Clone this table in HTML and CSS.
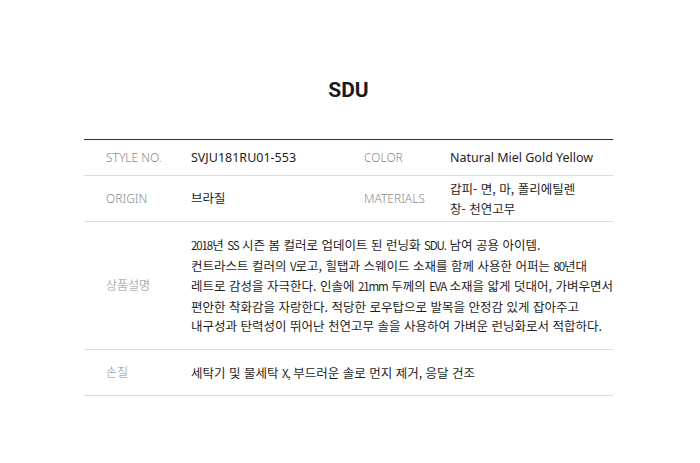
FILE: index.html
```html
<!DOCTYPE html>
<html lang="ko">
<head>
<meta charset="utf-8">
<title>SDU</title>
<link rel="stylesheet" href="styles.css">
</head>
<body>
<div class="wrap">
  <h1 class="title">SDU</h1>
  <div class="spec">
    <div class="row row-1">
      <div class="label">STYLE NO.</div>
      <div class="value">SVJU181RU01-553</div>
      <div class="label">COLOR</div>
      <div class="value">Natural Miel Gold Yellow</div>
    </div>
    <div class="row row-2">
      <div class="label">ORIGIN</div>
      <div class="value">브라질</div>
      <div class="label">MATERIALS</div>
      <div class="value multi">갑피- 면, 마, 폴리에틸렌<br>창- 천연고무</div>
    </div>
    <div class="row row-3">
      <div class="label">상품설명</div>
      <div class="value wide desc"><span class="en">2018</span>년 <span class="en">SS</span> 시즌 봄 컬러로 업데이트 된 런닝화 <span class="en">SDU.</span> 남여 공용 아이템.<br>컨트라스트 컬러의 <span class="en">V</span>로고, 힐탭과 스웨이드 소재를 함께 사용한 어퍼는 <span class="en">80</span>년대<br>레트로 감성을 자극한다. 인솔에 <span class="en">21mm</span> 두께의 <span class="en">EVA</span> 소재을 얇게 덧대어, 가벼우면서<br>편안한 착화감을 자랑한다. 적당한 로우탑으로 발목을 안정감 있게 잡아주고<br>내구성과 탄력성이 뛰어난 천연고무 솔을 사용하여 가벼운 런닝화로서 적합하다.</div>
    </div>
    <div class="row row-4">
      <div class="label">손질</div>
      <div class="value wide">세탁기 및 물세탁 <span class="en">X,</span> 부드러운 솔로 먼지 제거, 응달 건조</div>
    </div>
  </div>
</div>
</body>
</html>
```
FILE: styles.css
```css
html, body {
  margin: 0;
  padding: 0;
  background: #fff;
}
body {
  font-family: "Noto Sans", "Noto Sans CJK KR", sans-serif;
  color: #222;
}
.wrap {
  width: 529px;
  margin-left: 84px;
  padding-top: 78px;
}
.title {
  margin: 0 0 37px 0;
  font-family: Roboto, "Noto Sans", sans-serif;
  font-weight: 700;
  font-size: 21px;
  line-height: 24px;
  text-align: center;
  color: #1a1a1a;
}
.spec {
  border-top: 1px solid #333;
}
.row {
  display: grid;
  grid-template-columns: 85px 173px 86px 1fr;
  align-items: center;
  padding-left: 22px;
  border-bottom: 1px solid #dcdcdc;
  font-size: 12px;
}
.row-1 { height: 35px; }
.row-2 { height: 45px; }
.row-3 { height: 127px; }
.row-4 { height: 45px; }
.label {
  color: #8a8a8a;
  font-weight: 300;
  font-size: 12px;
  line-height: 20px;
  font-family: "Noto Sans", "Noto Sans CJK KR", sans-serif;
}
.value {
  color: #1e1e1e;
  font-size: 12.5px;
  line-height: 20px;
  font-family: "Noto Sans", "Noto Sans CJK KR", sans-serif;
}
.multi {
  font-family: "Noto Sans CJK KR", "Noto Sans", sans-serif;
}
.wide {
  grid-column: 2 / 5;
  font-family: "Noto Sans CJK KR", sans-serif;
  font-size: 12.5px;
}
.desc {
  line-height: 19.6px;
  white-space: nowrap;
}
.en {
  font-size: 11.5px;
  letter-spacing: -1.1px;
}
```
